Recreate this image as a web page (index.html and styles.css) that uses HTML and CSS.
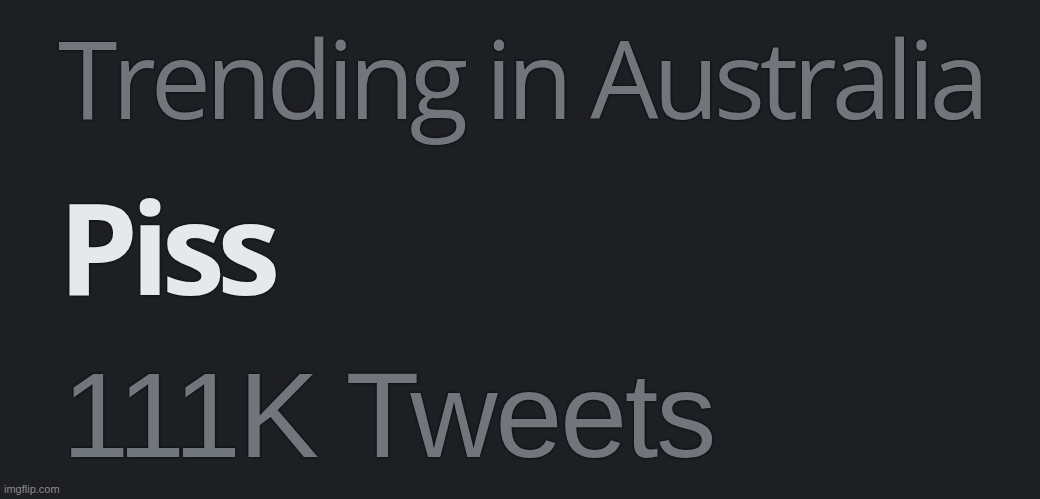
FILE: index.html
```html
<!DOCTYPE html>
<html>
<head>
<meta charset="utf-8">
<link rel="stylesheet" href="styles.css">
</head>
<body>
<div class="trend">
  <div class="context">Trending in Australia</div>
  <div class="topic">Piss</div>
  <div class="count">111K Tweets</div>
</div>
<div class="watermark">imgflip.com</div>
</body>
</html>
```
FILE: styles.css
```css
html, body {
  margin: 0;
  padding: 0;
  width: 1040px;
  height: 499px;
  overflow: hidden;
  background: #1e1f23;
}
body {
  position: relative;
  font-family: "Open Sans", "Noto Sans", sans-serif;
}
.trend {
  display: flex;
  flex-direction: column;
  padding: 18px 0 0 58px;
}
.context {
  color: #71767d;
  font-size: 108px;
  line-height: 120px;
  letter-spacing: -5.5px;
  text-shadow: 0 0 3px #000;
}
.topic {
  color: #e7e8ea;
  font-weight: 700;
  font-size: 128px;
  line-height: 215px;
  height: 215px;
  letter-spacing: -8px;
  text-shadow: 0 0 3px #000;
}
.count {
  color: #71767d;
  font-family: "Liberation Sans", Arial, sans-serif;
  font-size: 121px;
  line-height: 124px;
  letter-spacing: -2.5px;
  padding-left: 4px;
  text-shadow: 0 0 3px #000;
}
.watermark {
  position: absolute;
  left: 4px;
  bottom: 4px;
  color: #8a8b8e;
  font-family: "Liberation Sans", Arial, sans-serif;
  font-size: 11px;
}
```
